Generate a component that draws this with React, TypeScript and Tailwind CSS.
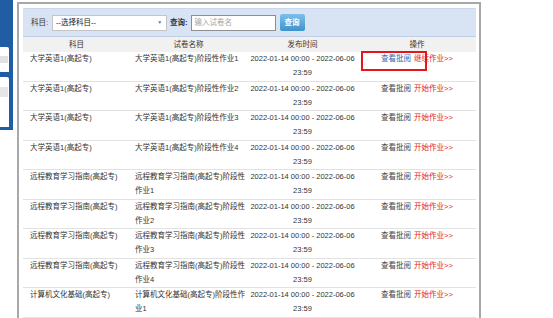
import React from 'react';

type Row = {
  course: string;
  title: string;
  started?: boolean;
};

const rows: Row[] = [
  { course: '大学英语1(高起专)', title: '大学英语1(高起专)阶段性作业1', started: true },
  { course: '大学英语1(高起专)', title: '大学英语1(高起专)阶段性作业2' },
  { course: '大学英语1(高起专)', title: '大学英语1(高起专)阶段性作业3' },
  { course: '大学英语1(高起专)', title: '大学英语1(高起专)阶段性作业4' },
  { course: '远程教育学习指南(高起专)', title: '远程教育学习指南(高起专)阶段性作业1' },
  { course: '远程教育学习指南(高起专)', title: '远程教育学习指南(高起专)阶段性作业2' },
  { course: '远程教育学习指南(高起专)', title: '远程教育学习指南(高起专)阶段性作业3' },
  { course: '远程教育学习指南(高起专)', title: '远程教育学习指南(高起专)阶段性作业4' },
  { course: '计算机文化基础(高起专)', title: '计算机文化基础(高起专)阶段性作业1' },
];

export default function App() {
  return (
    <div className="relative w-[553px] h-[318px] overflow-hidden bg-white flex font-['Liberation_Sans','Noto_Sans_CJK_SC',sans-serif] text-[7.5px] text-[#333]">
      {/* left nav edge */}
      <aside className="w-[13px] h-[130px] shrink-0 bg-[#1f5ea5] flex flex-col pt-[47px] gap-[5px] pr-[4px]">
        <div className="h-[25px] bg-white rounded-tr-[2px] flex items-center">
          <div className="w-[8px] h-[7px] bg-[#e2e2e2]" />
        </div>
        <div className="h-[50px] bg-white rounded-tr-[2px] pt-[10px]">
          <div className="w-[8px] h-[10px] bg-[#e6e6e6]" />
        </div>
      </aside>

      {/* main frame */}
      <main className="ml-[4px] mt-[2px] w-[464px] shrink-0 border-2 border-b-0 border-[#a8a8a8] pl-[4px] pr-[3px] pt-[4px]">
        {/* search bar */}
        <div className="h-[29px] bg-[#d8e4f3] border-t border-t-[#c9d8ec] border-b border-b-[#bdcfe6] flex items-center pl-[8px]">
          <span>科目:</span>
          <div className="ml-[4px] w-[115px] h-[16px] bg-white border border-[#c4c4c4] flex items-center justify-between pl-[3px] pr-[4px] text-[#222]">
            <span>--选择科目--</span>
            <span className="text-[5px] text-[#777]">▼</span>
          </div>
          <span className="ml-[3px] font-bold text-[#333]">查询:</span>
          <div className="ml-[3px] w-[85px] h-[16px] bg-white border border-[#8f8f8f] flex items-center pl-[3px] text-[#a5a5a5]">
            输入试卷名
          </div>
          <button className="ml-[4px] w-[25px] h-[17px] rounded-[2px] bg-gradient-to-b from-[#7cc0ea] to-[#3f92cd] text-white font-bold flex items-center justify-center">
            查询
          </button>
        </div>

        {/* table */}
        <table className="w-[453px] table-fixed border-collapse">
          <colgroup>
            <col className="w-[107px]" />
            <col className="w-[117px]" />
            <col className="w-[111px]" />
            <col className="w-[118px]" />
          </colgroup>
          <thead>
            <tr className="h-[15px] bg-[#f1f1f1]">
              <th className="font-normal text-center">科目</th>
              <th className="font-normal text-center">试卷名称</th>
              <th className="font-normal text-center">发布时间</th>
              <th className="font-normal text-center">操作</th>
            </tr>
          </thead>
          <tbody>
            {rows.map((r, i) => (
              <tr key={i} className="border-b border-[#e2e2e2] leading-[14.25px] align-top">
                <td className="pl-[7px]">{r.course}</td>
                <td className="pl-[5px]">{r.title}</td>
                <td className="text-center">
                  <div className="whitespace-nowrap">2022-01-14 00:00 - 2022-06-06</div>
                  <div>23:59</div>
                </td>
                <td className="text-center whitespace-nowrap">
                  <span className={r.started ? 'text-[#3567b0] mr-[3px]' : 'text-[#444] mr-[3px]'}>查看批阅</span>
                  <span className="text-[#e2231a]">{r.started ? '继续作业>>' : '开始作业>>'}</span>
                </td>
              </tr>
            ))}
          </tbody>
        </table>
      </main>

      {/* annotation highlight */}
      <div className="absolute left-[361px] top-[51px] w-[66px] h-[20px] border-2 border-[#e8141c] pointer-events-none" />
    </div>
  );
}
